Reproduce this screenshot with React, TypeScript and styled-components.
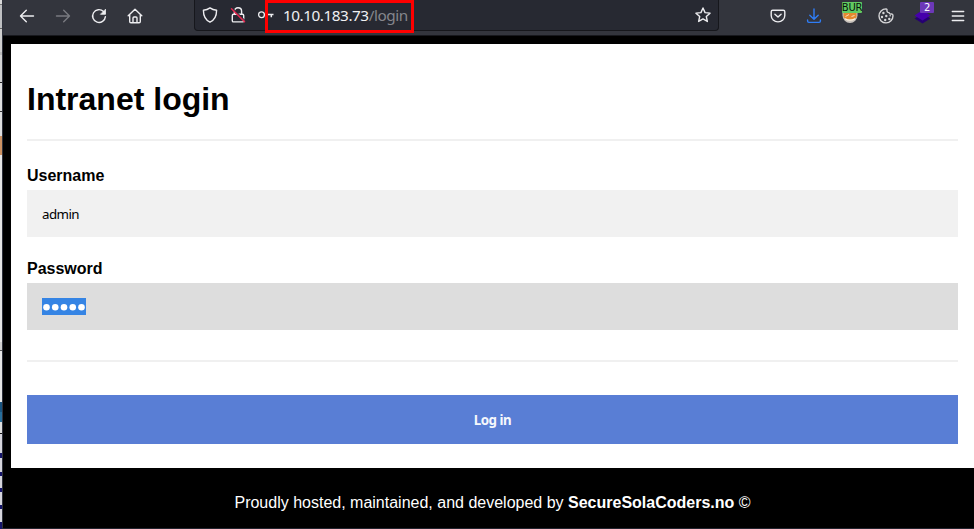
import React from "react";
import styled, { createGlobalStyle } from "styled-components";

const Global = createGlobalStyle`
  * { box-sizing: border-box; }
  body { margin: 0; background: #000; overflow: hidden; }
`;

const Desktop = styled.div`
  display: flex;
  width: 974px;
  height: 529px;
  overflow: hidden;
`;

const BackWindow = styled.div`
  flex: 0 0 2px;
  height: 529px;
  display: flex;
  flex-direction: column;
`;

const Sliver = styled.span<{ $h: number; $color: string }>`
  flex: 0 0 ${(p) => p.$h}px;
  background: ${(p) => p.$color};
`;

const Browser = styled.div`
  flex: 1;
  min-width: 0;
  display: flex;
  flex-direction: column;
  border-left: 1px solid #2f323d;
  border-bottom: 1px solid #23242f;
  background: #000;
`;

const Toolbar = styled.header`
  flex: 0 0 36px;
  display: flex;
  align-items: flex-start;
  padding-left: 6px;
  background: #33353d;
  border-bottom: 1px solid #17181d;
`;

const ToolButton = styled.span`
  position: relative;
  flex: 0 0 36px;
  height: 31px;
  display: flex;
  align-items: center;
  justify-content: center;

  svg { display: block; }
`;

const AddressBar = styled.div`
  position: relative;
  flex: 0 0 525px;
  height: 31px;
  margin: 0 41px 0 41px;
  display: flex;
  align-items: center;
  padding: 0 7px 0 7px;
  background: #272932;
  border: 1px solid #16171c;
  border-top: 0;
  border-radius: 0 0 4px 4px;

  svg { display: block; flex: none; }
`;

const Indicators = styled.div`
  display: flex;
  gap: 12px;
  width: 81px;
  flex: none;
`;

const Url = styled.span`
  flex: 1;
  font: 15.3px/20px "Noto Sans", sans-serif;
  letter-spacing: -0.45px;
  color: #f0f0f2;
  white-space: nowrap;
`;

const Path = styled.span`
  color: #85868c;
`;

const Highlight = styled.div`
  position: absolute;
  left: 70px;
  top: 0;
  width: 149px;
  height: 33px;
  border: 3px solid #f00;
`;

const Badge = styled.span<{ $left: number; $w: number; $bg: string; $fg: string }>`
  position: absolute;
  left: ${(p) => p.$left}px;
  top: 2px;
  width: ${(p) => p.$w}px;
  height: 11px;
  display: flex;
  justify-content: center;
  border-radius: 1px;
  background: ${(p) => p.$bg};
  color: ${(p) => p.$fg};
  font: 10px/11px "DejaVu Sans", sans-serif;
  letter-spacing: -0.2px;
  white-space: nowrap;
`;

const Page = styled.main`
  flex: 0 0 424px;
  margin: 8px 0 0 8px;
  padding: 0 16px;
  background: #fff;
  color: #000;
  font: 16px/18px "Liberation Sans", Arial, sans-serif;
`;

const Title = styled.h1`
  margin: 0;
  padding-top: 37px;
  font-size: 32px;
  line-height: 37px;
  font-weight: 700;
`;

const Rule = styled.hr<{ $top: number; $bottom: number }>`
  height: 2px;
  margin: ${(p) => p.$top}px 0 ${(p) => p.$bottom}px;
  border: 0;
  background: #f0f0f0;
`;

const Field = styled.label`
  display: block;
  padding-top: 1px;
  margin-bottom: 22px;
  font-weight: 700;
`;

const FieldBox = styled.div<{ $focused?: boolean }>`
  height: 47px;
  margin-top: 5px;
  padding: 0 15px;
  display: flex;
  align-items: center;
  background: ${(p) => (p.$focused ? "#ddd" : "#f1f1f1")};
  font: 13.33px/18px "Noto Sans", sans-serif;
  letter-spacing: -0.55px;
`;

const Selection = styled.span`
  display: flex;
  align-items: center;
  width: 44px;
  height: 17px;
  background: #3584e4;
`;

const Submit = styled.button`
  display: block;
  width: 100%;
  height: 49px;
  padding: 0;
  border: 0;
  background: #597ed5;
  color: #f5f7fc;
  font: 700 13.33px/18px "Noto Sans", sans-serif;
  letter-spacing: -0.5px;
`;

const Footer = styled.footer`
  margin-left: 8px;
  padding: 25px 0 0;
  color: #fff;
  text-align: center;
  font: 16px/19px "Liberation Sans", Arial, sans-serif;
`;

const stroke = {
  fill: "none",
  stroke: "#ededf0",
  strokeWidth: 1.4,
  strokeLinecap: "round" as const,
  strokeLinejoin: "round" as const,
};

const Icon = ({ children, w = 16 }: { children: React.ReactNode; w?: number }) => (
  <svg width={w} height="16" viewBox={`0 0 ${w} 16`} {...stroke}>
    {children}
  </svg>
);

const slivers: [number, string][] = [
  [4, "#d8d8d8"], [1, "#777"], [23, "#bfc0c2"], [1, "#666"], [23, "#cfcfcf"],
  [3, "#bbb"], [27, "#d3d3d3"], [1, "#222"], [28, "#dedede"], [1, "#333"],
  [24, "#dedede"], [19, "#cd9262"], [187, "#e6e6e6"], [8, "#d0d0d0"], [1, "#555"],
  [51, "#e6e6e6"], [10, "#185480"], [10, "#276e9b"], [11, "#dedede"], [1, "#111"],
  [19, "#d5d5dc"], [5, "#15156b"], [14, "#d5d5dc"], [4, "#15156b"], [12, "#d5d5dc"],
  [4, "#15156b"], [13, "#d5d5dc"], [4, "#15156b"], [13, "#d5d5dc"], [7, "#15156b"],
];

export default function App() {
  return (
    <Desktop>
      <Global />
      <BackWindow>
        {slivers.map(([h, color], i) => (
          <Sliver key={i} $h={h} $color={color} />
        ))}
      </BackWindow>
      <Browser>
        <Toolbar>
          <ToolButton>
            <Icon><path d="M14.5 8H1.5M7.3 2.2 1.5 8l5.8 5.8" /></Icon>
          </ToolButton>
          <ToolButton>
            <Icon><path stroke="#797a80" d="M1.5 8h13M8.7 2.2 14.5 8l-5.8 5.8" /></Icon>
          </ToolButton>
          <ToolButton>
            <Icon>
              <path d="M12.5 3.5A6.4 6.4 0 1 0 14.4 8.6" />
              <path d="M14.5 1.6v4.7H9.8z" fill="#ededf0" strokeWidth="0.8" />
            </Icon>
          </ToolButton>
          <ToolButton>
            <Icon>
              <path d="M1.2 7.8 8 1.2l6.8 6.6M2.7 6.8v6.7c0 .7.5 1.2 1.2 1.2h8.2c.7 0 1.2-.5 1.2-1.2V6.8M6 14.5V10c0-.6.4-1 1-1h2c.6 0 1 .4 1 1v4.5" />
            </Icon>
          </ToolButton>
          <AddressBar>
            <Indicators>
              <Icon>
                <path d="M8 .9c2 1.5 4.2 2.2 6.6 2.4 0 5.5-1.8 9.7-6.6 11.9C3.2 13 1.4 8.8 1.4 3.3 3.8 3.1 6 2.4 8 .9Z" />
              </Icon>
              <Icon>
                <path d="M4.4 7V4.3C4.4 2.3 6 .8 8 .8s3.600 1.500 3.600 3.500V7M3.500 7.300h9c.7 0 1.200.5 1.200 1.200v5.200c0 .7-.5 1.200-1.200 1.200h-9c-.7 0-1.200-.5-1.200-1.200V8.500c0-.7.5-1.200 1.200-1.200Z" />
                <path d="m2.700 1.300 12 12" stroke="#272932" strokeWidth="1.200" />
                <path d="m1.500 1.800 13 12.800" stroke="#e22850" strokeWidth="1.500" />
              </Icon>
              <Icon>
                <circle cx="3.500" cy="7.700" r="2.900" strokeWidth="1.300" />
                <path d="M6.500 7.500h9M13.300 7.500v2.700" strokeWidth="1.500" strokeLinecap="butt" />
              </Icon>
            </Indicators>
            <Url>10.10.183.73<Path>/login</Path></Url>
            <Icon>
              <path d="m8 1 2.050 4.600 5 .55-3.750 3.350 1.050 4.950L8 11.950l-4.350 2.500L4.700 9.500.95 6.150l5-.55Z" />
            </Icon>
            <Highlight />
          </AddressBar>
          <ToolButton>
            <Icon>
              <path d="M2.700 2.300h10.600c.9 0 1.500.6 1.500 1.500v3.700c0 3.700-3 6.400-6.800 6.400S1.200 11.200 1.200 7.500V3.800c0-.9.6-1.500 1.500-1.500ZM4.900 6.200 8 9.100l3.100-2.900" />
            </Icon>
          </ToolButton>
          <ToolButton>
            <Icon>
              <path stroke="#2f7df6" d="M8 1v10M3.800 7.200 8 11.300l4.200-4.100M1.600 11.900v1.200c0 .8.500 1.300 1.300 1.300h10.200c.8 0 1.300-.5 1.300-1.300v-1.200" />
            </Icon>
          </ToolButton>
          <ToolButton>
            <svg width="16" height="16" viewBox="0 0 16 16">
              <path d="M.5 3h15v4.500a7.500 7.500 0 0 1-15 0Z" fill="#c9c3bd" />
              <path d="M1.500 5h13v4.500l-3.500 2H5L1.500 9.500Z" fill="#e6892f" />
              <path d="M3.500 8.500 7 6.500M9.500 8.500l3-1" stroke="#f8dcb8" fill="none" />
              <path d="M3 10.700q5 3 10 0" stroke="#fff1de" strokeWidth="1.300" fill="none" />
            </svg>
            <Badge $left={10} $w={20} $bg="#62cb62" $fg="#07150a">BUR</Badge>
          </ToolButton>
          <ToolButton>
            <Icon>
              <path d="M8 .9C9 1 9.200 2 8.900 2.900c.2 1.300 1.100 1.900 2.200 1.700.3 1.300 1.500 1.800 2.600 1.300.8.100 1.300.8 1.300 1.900A7 7 0 1 1 8 .9Z" stroke="#d5d5d7" />
              <g fill="#d5d5d7" stroke="none">
                <circle cx="5.400" cy="5" r="1.200" />
                <circle cx="4" cy="9" r="1.200" />
                <circle cx="8.300" cy="8" r="1.200" />
                <circle cx="7.200" cy="12" r="1.200" />
                <circle cx="11.300" cy="11" r="1.200" />
                <circle cx="12.200" cy="7.700" r=".8" />
              </g>
            </Icon>
          </ToolButton>
          <ToolButton>
            <svg width="17" height="16" viewBox="0 0 17 16">
              <path d="m.5 10.500 8-4.500 8 4.500-8 5Z" fill="#260072" />
              <path d="m.5 7.500 8-5.500 8 5.500-8 5Z" fill="#4600ac" />
            </svg>
            <Badge $left={16} $w={14} $bg="#6c38b8" $fg="#fff">2</Badge>
          </ToolButton>
          <ToolButton>
            <Icon><path d="M2.300 3.500h11.400M2.300 8h11.400M2.300 12.500h11.400" /></Icon>
          </ToolButton>
        </Toolbar>
        <Page>
          <Title>Intranet login</Title>
          <Rule $top={21} $bottom={25} />
          <Field>
            Username
            <FieldBox>admin</FieldBox>
          </Field>
          <Field>
            Password
            <FieldBox $focused>
              <Selection role="img" aria-label="5 hidden characters">
                <svg width="44" height="17" viewBox="0 0 44 17" fill="#fff">
                  {[4.5, 13.25, 22, 30.75, 39.5].map((x) => (
                    <circle key={x} cx={x} cy="9.200" r="3.300" />
                  ))}
                </svg>
              </Selection>
            </FieldBox>
          </Field>
          <Rule $top={30} $bottom={33} />
          <Submit>Log in</Submit>
        </Page>
        <Footer>
          Proudly hosted, maintained, and developed by <b>SecureSolaCoders.no</b> ©
        </Footer>
      </Browser>
    </Desktop>
  );
}
